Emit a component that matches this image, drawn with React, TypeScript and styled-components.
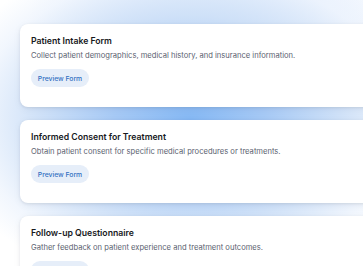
import React from "react";
import styled, { createGlobalStyle } from "styled-components";

const Global = createGlobalStyle`
  html, body {
    margin: 0;
    padding: 0;
    width: 363px;
    height: 266px;
    overflow: hidden;
    background: #ffffff;
  }
  * { box-sizing: border-box; }
`;

const Page = styled.div`
  width: 363px;
  height: 266px;
  overflow: hidden;
  padding: 24px 0 0 20px;
  font-family: Inter, "Noto Sans", sans-serif;
  background:
    radial-gradient(ellipse 250px 175px at 190px 120px, #85b8f4 0%, #a6c9f5 30%, #cfe1f8 60%, rgba(236,243,253,0.7) 85%, rgba(255,255,255,0) 100%),
    radial-gradient(ellipse 200px 90px at 230px 15px, #d9e7fb 0%, rgba(255,255,255,0) 100%),
    #ffffff;
`;

const List = styled.div`
  display: flex;
  flex-direction: column;
  gap: 13px;
  width: 420px;
`;

const Card = styled.div`
  background: #ffffff;
  border-radius: 8px;
  padding: 11px 11px 20px;
  box-shadow: 0 1px 3px rgba(30, 40, 60, 0.1), 0 2px 8px rgba(30, 40, 60, 0.05);
  display: flex;
  flex-direction: column;
  align-items: flex-start;
`;

const Title = styled.div`
  font-size: 8.7px;
  line-height: 12px;
  font-weight: 600;
  color: #17191d;
`;

const Desc = styled.div`
  margin-top: 4px;
  font-size: 7.6px;
  line-height: 10px;
  color: #5b6270;
`;

const Button = styled.button`
  margin-top: 8px;
  height: 18px;
  width: 58px;
  padding: 0;
  border: none;
  border-radius: 9px;
  background: #e6eef9;
  color: #3471c2;
  font-family: Inter, "Noto Sans", sans-serif;
  font-size: 6.8px;
  font-weight: 500;
  white-space: nowrap;
  cursor: pointer;
`;

const forms = [
  {
    title: "Patient Intake Form",
    desc: "Collect patient demographics, medical history, and insurance information.",
  },
  {
    title: "Informed Consent for Treatment",
    desc: "Obtain patient consent for specific medical procedures or treatments.",
  },
  {
    title: "Follow-up Questionnaire",
    desc: "Gather feedback on patient experience and treatment outcomes.",
  },
];

export default function App() {
  return (
    <>
      <Global />
      <Page>
        <List>
          {forms.map((f) => (
            <Card key={f.title}>
              <Title>{f.title}</Title>
              <Desc>{f.desc}</Desc>
              <Button>Preview Form</Button>
            </Card>
          ))}
        </List>
      </Page>
    </>
  );
}
